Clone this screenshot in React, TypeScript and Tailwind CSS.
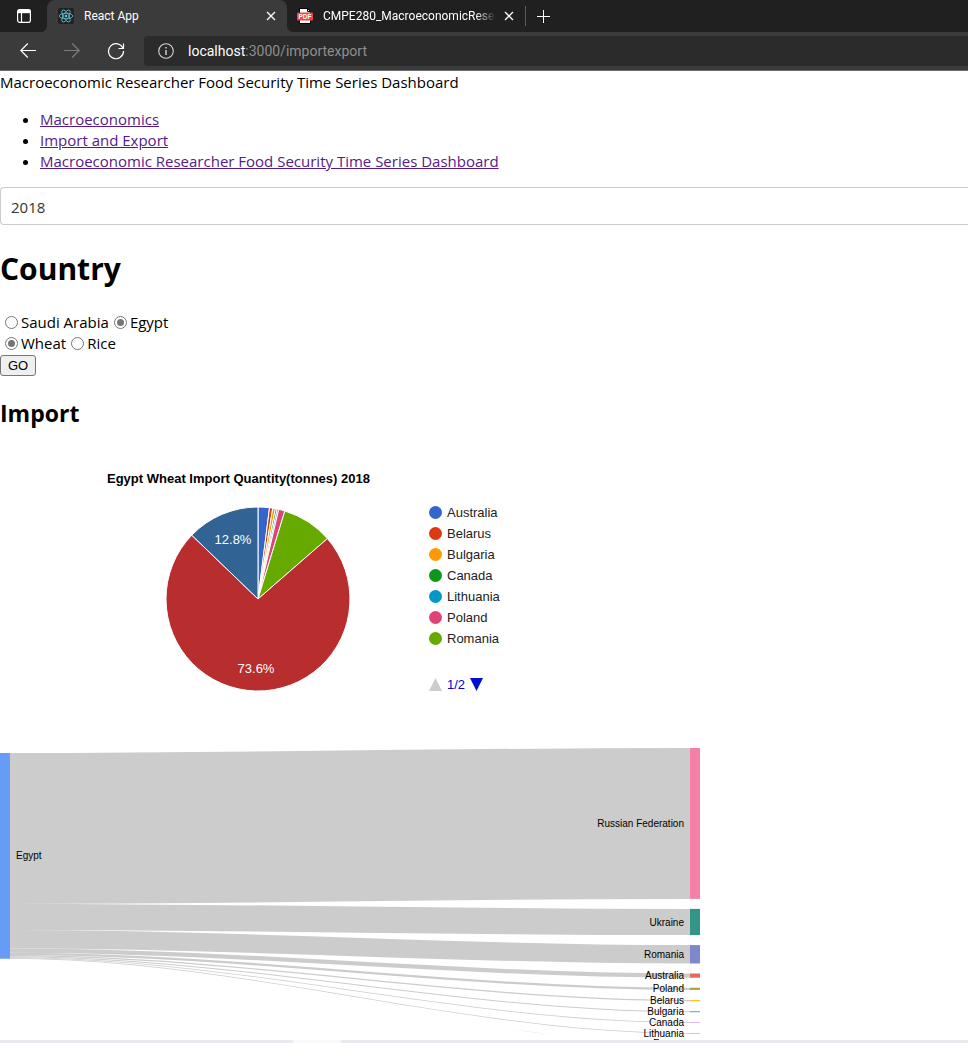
import React, { useState } from "react";

const slices = [
  { name: "Australia", share: 2, color: "#3366cc" },
  { name: "Belarus", share: 0.56, color: "#dc3912" },
  { name: "Bulgaria", share: 0.47, color: "#ff9900" },
  { name: "Canada", share: 0.31, color: "#109618" },
  { name: "Lithuania", share: 0.27, color: "#0099c6" },
  { name: "Poland", share: 1.1, color: "#dd4477" },
  { name: "Romania", share: 8.89, color: "#66aa00" },
  { name: "Russian Federation", share: 73.6, color: "#b82e2e" },
  { name: "Ukraine", share: 12.8, color: "#316395" },
];

const legend = [
  { name: "Australia", swatch: "bg-[#3366cc]" },
  { name: "Belarus", swatch: "bg-[#dc3912]" },
  { name: "Bulgaria", swatch: "bg-[#ff9900]" },
  { name: "Canada", swatch: "bg-[#109618]" },
  { name: "Lithuania", swatch: "bg-[#0099c6]" },
  { name: "Poland", swatch: "bg-[#dd4477]" },
  { name: "Romania", swatch: "bg-[#66aa00]" },
];

const flows = [
  { name: "Russian Federation", size: 150.9, color: "#f47fa7" },
  { name: "Ukraine", size: 26.2, color: "#339588" },
  { name: "Romania", size: 18.4, color: "#7d88cc" },
  { name: "Australia", size: 4.2, color: "#e5695e" },
  { name: "Poland", size: 2.3, color: "#b3a63c" },
  { name: "Belarus", size: 1.2, color: "#fbc02d" },
  { name: "Bulgaria", size: 1, color: "#4db380" },
  { name: "Canada", size: 0.8, color: "#d9a8e6" },
  { name: "Lithuania", size: 0.7, color: "#ff9a80" },
  { name: "France", size: 0.02, color: "#679cf6" },
];

function PieChart() {
  const radius = 92;
  const point = (share: number) => {
    const a = (share / 100) * Math.PI * 2;
    return `${100 + radius * Math.sin(a)} ${100 - radius * Math.cos(a)}`;
  };
  let start = 0;
  return (
    <svg width="200" height="200" viewBox="0 0 200 200" role="img" aria-label="Wheat import shares">
      {slices.map((s) => {
        const from = start;
        start += s.share;
        return (
          <path
            key={s.name}
            d={`M100 100L${point(from)}A${radius} ${radius} 0 ${s.share > 50 ? 1 : 0} 1 ${point(start)}Z`}
            fill={s.color}
            stroke="#fff"
            strokeWidth="1"
          />
        );
      })}
      <g fill="#fff" fontFamily="Liberation Sans, Arial, sans-serif" fontSize="13" textAnchor="middle">
        <text x="75" y="45">12.8%</text>
        <text x="98" y="174">73.6%</text>
      </g>
    </svg>
  );
}

function Sankey() {
  let left = 5;
  let right = 0;
  const total = flows.reduce((sum, f) => sum + f.size, 0);
  const rows = flows.map((f) => {
    const row = { ...f, left, right };
    left += f.size;
    right += f.size + 10;
    return row;
  });
  return (
    <svg width="700" height="292" viewBox="0 0 700 292" className="block overflow-hidden" role="img" aria-label="Egypt wheat import flows">
      {rows.map((r) => (
        <path
          key={r.name}
          fill="#ccc"
          d={`M10 ${r.left}C237 ${r.left} 463 ${r.right} 690 ${r.right}V${r.right + r.size}C463 ${r.right + r.size} 237 ${r.left + r.size} 10 ${r.left + r.size}Z`}
        />
      ))}
      <rect x="0" y="5" width="10" height={total} fill="#679cf6" />
      {rows.map((r) => (
        <rect key={r.name} x="690" y={r.right} width="10" height={r.size} fill={r.color} />
      ))}
      <g fontFamily="Liberation Sans, Arial, sans-serif" fontSize="10" fill="#000">
        <text x="16" y="111">Egypt</text>
        {rows.map((r) => (
          <text key={r.name} x="684" y={r.right + r.size / 2 + 3.5} textAnchor="end">
            {r.name}
          </text>
        ))}
      </g>
    </svg>
  );
}

function CloseIcon() {
  return (
    <svg width="10" height="10" viewBox="0 0 10 10" stroke="currentColor" strokeWidth="1.3" fill="none">
      <path d="M1 1l8 8M9 1l-8 8" />
    </svg>
  );
}

function BrowserBar() {
  return (
    <header className="border-b border-[#6b6b6b] bg-[#3b3b3b] font-[Roboto,sans-serif] text-white">
      <div className="flex h-8 text-xs">
        <div className="flex w-[47px] items-center justify-center rounded-br-md bg-[#202020]">
          <button aria-label="Tab actions">
            <svg width="16" height="16" viewBox="0 0 16 16" fill="none" stroke="#fff" strokeWidth="1.2">
              <rect x="1.6" y="1.6" width="12.8" height="12.8" rx="2.2" />
              <path d="M1.6 3.5h12.8" strokeWidth="3.4" />
              <path d="M5.5 5v9" />
            </svg>
          </button>
        </div>
        <div className="flex bg-[#202020]">
          <div className="flex w-[240px] items-center rounded-t-lg bg-[#3b3b3b] pl-[11px] pr-[11px]">
            <svg width="16" height="16" viewBox="0 0 16 16" fill="none" stroke="#61c4de" strokeWidth="0.8" aria-hidden="true">
              <rect width="16" height="16" rx="2" fill="#222" stroke="none" />
              <ellipse cx="8" cy="8" rx="6.8" ry="2.7" />
              <ellipse cx="8" cy="8" rx="6.8" ry="2.7" transform="rotate(60 8 8)" />
              <ellipse cx="8" cy="8" rx="6.8" ry="2.7" transform="rotate(120 8 8)" />
              <circle cx="8" cy="8" r="1.3" fill="#61c4de" stroke="none" />
            </svg>
            <span className="ml-[10px] flex-1">React App</span>
            <button aria-label="Close React App"><CloseIcon /></button>
          </div>
        </div>
        <div className="flex flex-1 items-center rounded-bl-md bg-[#202020]">
          <div className="flex w-[238px] items-center pl-[10px] pr-[11px]">
            <svg width="16" height="16" viewBox="0 0 16 16" className="shrink-0" aria-hidden="true">
              <path d="M2.5 0.5h8l3 3v12h-11z" fill="#fff" stroke="#000" />
              <path d="M10.5 0.5v3h3" fill="none" stroke="#000" />
              <rect y="4.5" width="16" height="8" rx="1" fill="#f83f3f" />
              <text x="8" y="11" fontSize="6.5" fontWeight="700" textAnchor="middle" fill="#fff" fontFamily="Liberation Sans, sans-serif">PDF</text>
            </svg>
            <span className="ml-[10px] mr-2 flex-1 overflow-hidden whitespace-nowrap [mask-image:linear-gradient(to_right,#000_88%,transparent)]">
              CMPE280_MacroeconomicResearcher
            </span>
            <button aria-label="Close PDF tab"><CloseIcon /></button>
          </div>
          <div className="h-5 w-px bg-[#5c5c5c]" />
          <button aria-label="New tab" className="ml-[10px]">
            <svg width="15" height="15" viewBox="0 0 15 15" stroke="#fff" strokeWidth="1"><path d="M7.5 1v13M1 7.5h13" /></svg>
          </button>
        </div>
      </div>
      <div className="flex h-[38px] items-center pl-5">
        <button aria-label="Back">
          <svg width="16" height="16" viewBox="0 0 16 16" fill="none" stroke="#fff" strokeWidth="1.2"><path d="M16 7.5H.8M7.8.5l-7 7 7 7" /></svg>
        </button>
        <button aria-label="Forward" className="ml-7">
          <svg width="16" height="16" viewBox="0 0 16 16" fill="none" stroke="#7d7d7d" strokeWidth="1.2"><path d="M0 7.500h15.200M8.200.5l7 7-7 7" /></svg>
        </button>
        <button aria-label="Refresh" className="ml-[27px]">
          <svg width="18" height="18" viewBox="0 0 18 18" fill="none" stroke="#fff" strokeWidth="1.2"><path d="M16 6.500A7.500 7.500 0 1 0 16.500 9M16.500 1.500v5h-5" /></svg>
        </button>
        <div className="ml-[19px] flex h-[30px] flex-1 items-center rounded-l bg-[#2b2b2b] pl-[14px]">
          <svg width="16" height="16" viewBox="0 0 16 16" fill="none" stroke="#d6d6d6" strokeWidth="1.1" aria-hidden="true">
            <circle cx="8" cy="8" r="7.3" />
            <path d="M8 7v5M8 4v1.5" strokeWidth="1.4" />
          </svg>
          <span className="ml-[14px] text-sm text-[#8f8f8f]"><span className="text-white">localhost</span>:3000/importexport</span>
        </div>
      </div>
    </header>
  );
}

type RadioProps = { name: string; label: string; value: string; onChange: (v: string) => void };

function Radio({ name, label, value, onChange }: RadioProps) {
  return (
    <label className="flex items-center">
      <input
        type="radio"
        name={name}
        checked={value === label}
        onChange={() => onChange(label)}
        className="ml-[5px] mr-[3px] size-[13px] appearance-none rounded-full border border-[#767676] bg-white bg-clip-content p-[2px] checked:bg-[#767676]"
      />
      {label}
    </label>
  );
}

export default function App() {
  const [country, setCountry] = useState("Egypt");
  const [crop, setCrop] = useState("Wheat");
  return (
    <div className="overflow-hidden bg-white font-['Open_Sans','Noto_Sans',sans-serif] text-black">
      <BrowserBar />
      <main className="text-[15px] leading-[21px]">
        <div className="pt-px">Macroeconomic Researcher Food Security Time Series Dashboard</div>
        <ul className="my-4 list-disc pl-10">
          {["Macroeconomics", "Import and Export", "Macroeconomic Researcher Food Security Time Series Dashboard"].map((t) => (
            <li key={t}><a href="#" className="text-[#551a8b] underline">{t}</a></li>
          ))}
        </ul>
        <select aria-label="Year" className="-mt-px block h-[38px] w-full appearance-none rounded-l border border-r-0 border-[#ccc] bg-white px-[10px] pt-0.5 text-[#333]">
          <option>2018</option>
        </select>
        <h1 className="mb-[21px] mt-[22px] text-[30px] font-bold leading-[44px]">Country</h1>
        <div className="flex">
          <Radio name="country" label="Saudi Arabia" value={country} onChange={setCountry} />
          <Radio name="country" label="Egypt" value={country} onChange={setCountry} />
        </div>
        <div className="flex">
          <Radio name="crop" label="Wheat" value={crop} onChange={setCrop} />
          <Radio name="crop" label="Rice" value={crop} onChange={setCrop} />
        </div>
        <button className="mt-px block rounded-[3px] border border-[#767676] bg-[#efefef] px-[7px] font-['Liberation_Sans',Arial,sans-serif] text-[13px] leading-[19px]">GO</button>
        <h2 className="mb-[19px] mt-[21px] text-[23px] font-bold leading-8">Import</h2>
        <section className="flex h-[300px] font-['Liberation_Sans',Arial,sans-serif] text-[13px]">
          <div className="ml-[107px] w-[322px] pt-5">
            <h3 className="font-bold">Egypt Wheat Import Quantity(tonnes) 2018</h3>
            <div className="ml-[51px] mt-[10px]"><PieChart /></div>
          </div>
          <div className="pt-[54px] text-[#222]">
            <ul>
              {legend.map((l) => (
                <li key={l.name} className="flex items-center gap-[5px]">
                  <span className={`size-[13px] rounded-full ${l.swatch}`} />
                  {l.name}
                </li>
              ))}
            </ul>
            <div className="mt-[25px] flex items-center gap-[5px] text-[#0000cc]">
              <button aria-label="Previous legend page" disabled>
                <svg width="13" height="13" viewBox="0 0 13 13"><path d="M0 13h13L6.5 0z" fill="#ccc" /></svg>
              </button>
              1/2
              <button aria-label="Next legend page">
                <svg width="13" height="13" viewBox="0 0 13 13"><path d="M0 0h13L6.5 13z" fill="#0011cc" /></svg>
              </button>
            </div>
          </div>
        </section>
        <Sankey />
      </main>
      <footer className="flex h-[3px] bg-[#e9eaef]">
        <div className="ml-[293px] w-12 bg-[#f7f9fb]" />
      </footer>
    </div>
  );
}
